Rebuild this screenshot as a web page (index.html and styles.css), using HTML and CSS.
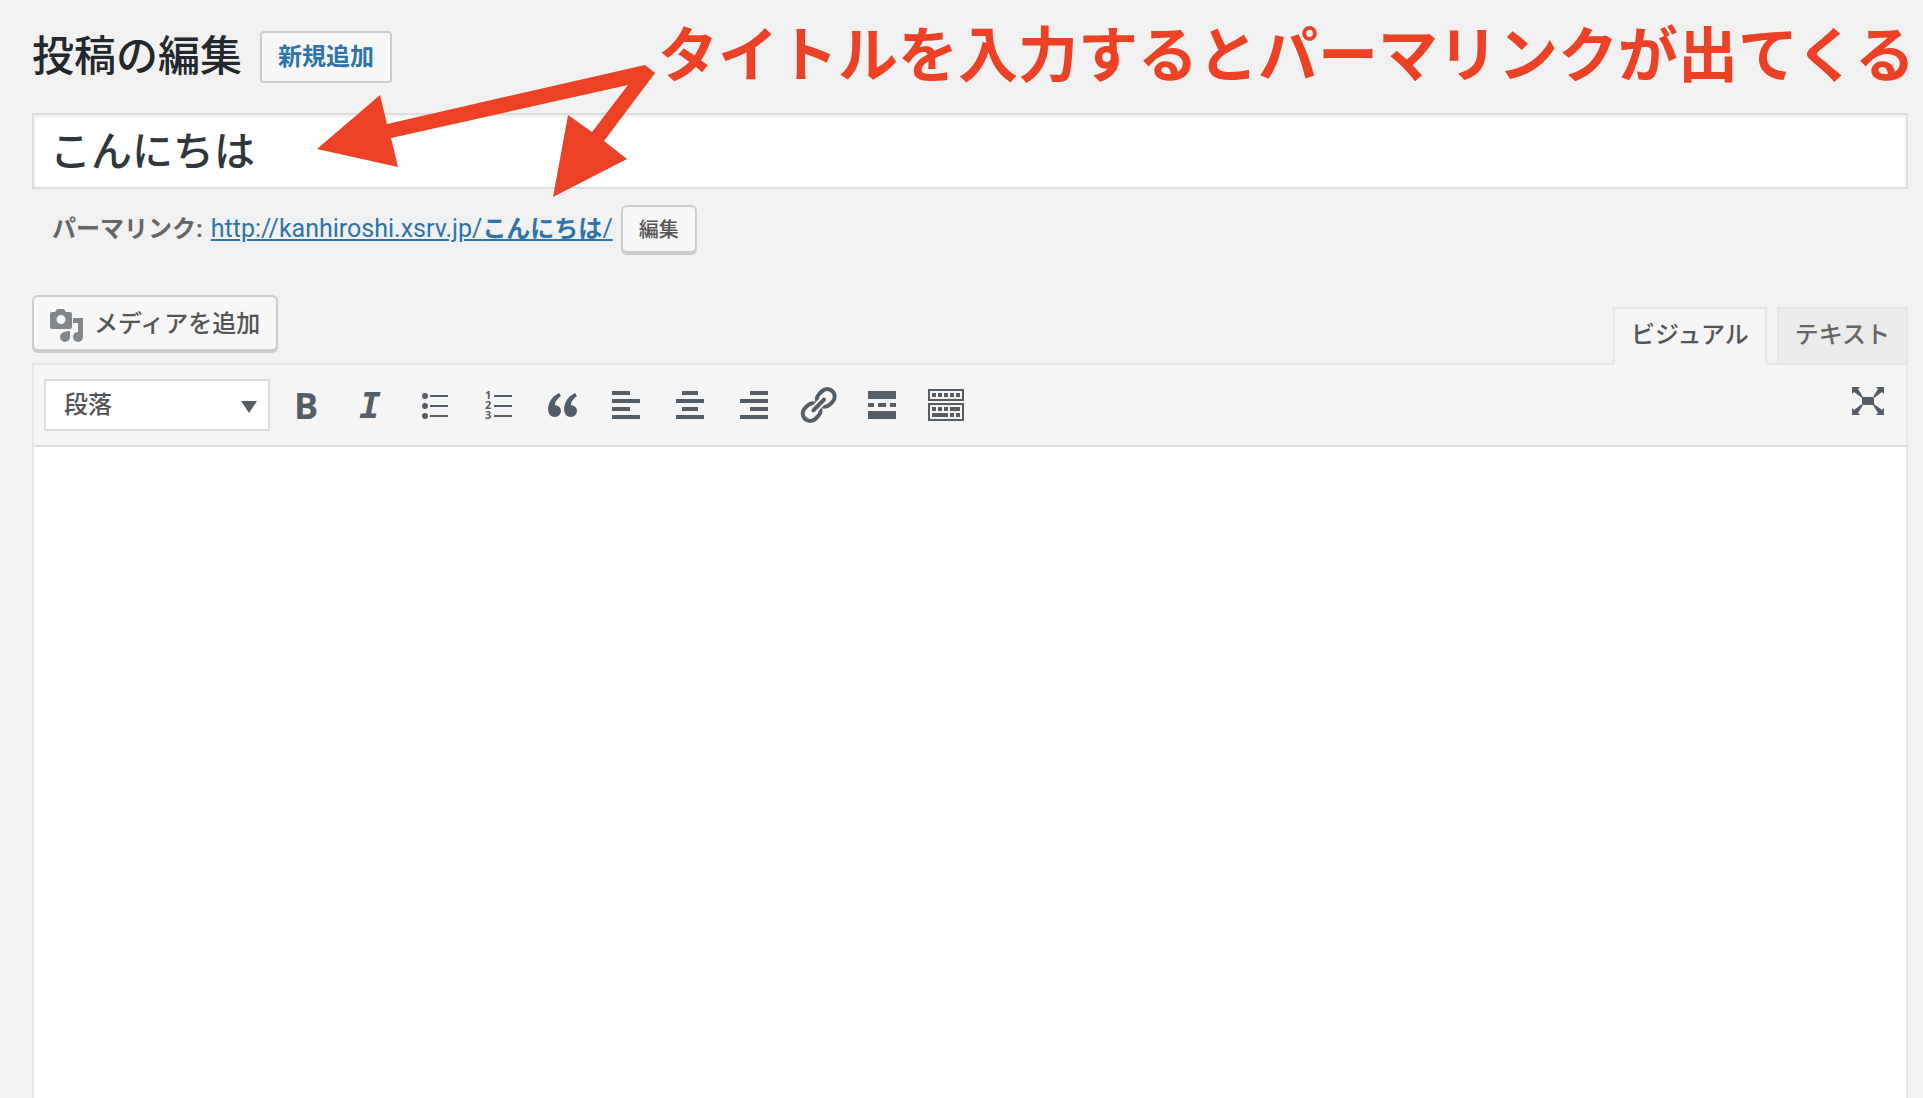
FILE: index.html
```html
<!DOCTYPE html>
<html lang="ja">
<head>
  <meta charset="UTF-8" />
  <meta name="viewport" content="width=device-width, initial-scale=1.0"/>
  <title>投稿の編集</title>
  <link rel="stylesheet" href="styles.css">
</head>
<body>

  <main class="wrap">
    <header class="page-head">
      <h1>投稿の編集</h1>
      <a href="#" class="page-title-action">新規追加</a>
      <p class="note">タイトルを入力するとパーマリンクが出てくる</p>
    </header>

    <input type="text" class="title" id="title" aria-label="タイトル" value="こんにちは">

    <div class="permalink">
      <strong>パーマリンク:</strong>
      <a href="#">http://kanhiroshi.xsrv.jp/<b>こんにちは</b>/</a>
      <button type="button" class="button small">編集</button>
    </div>

    <div class="editor-tools">
      <button type="button" class="button media">
        <svg class="media-icon" viewBox="0 0 34 34" aria-hidden="true">
          <path fill-rule="evenodd" d="M0 5q0-2 2-2h3l2-3h7l2 3h4q2 0 2 2v13q0 2-2 2H2q-2 0-2-2zM11 6a4.500 4.500 0 1 0 0 9a4.500 4.500 0 1 0 0-9z"/>
          <path d="M23 9h10v19a5 5 0 1 1-5-5V14h-5zM20 22v6a5 5 0 1 1-5-5q1-1 5-1z"/>
        </svg>
        <span>メディアを追加</span>
      </button>
      <div class="tabs">
        <button type="button" class="tab active">ビジュアル</button>
        <button type="button" class="tab">テキスト</button>
      </div>
    </div>

    <section class="editor">
      <div class="toolbar">
        <div class="format">
          <select aria-label="書式">
            <option>段落</option>
          </select>
        </div>
        <button type="button" class="tool bold" aria-label="太字">B</button>
        <button type="button" class="tool italic" aria-label="イタリック">I</button>
        <button type="button" class="tool" aria-label="番号なしリスト">
          <svg viewBox="0 0 40 40">
            <path d="M16 10h18v2H16zM16 20h18v2H16zM16 30h18v2H16z"/>
            <circle cx="11" cy="11" r="3"/><circle cx="11" cy="21" r="3"/><circle cx="11" cy="31" r="3"/>
          </svg>
        </button>
        <button type="button" class="tool" aria-label="番号付きリスト">
          <svg viewBox="0 0 40 40">
            <path d="M16 10h18v2H16zM16 20h18v2H16zM16 30h18v2H16z"/>
            <text x="7" y="14">1</text><text x="7" y="24">2</text><text x="7" y="34">3</text>
          </svg>
        </button>
        <button type="button" class="tool" aria-label="引用">
          <svg viewBox="0 0 40 40">
            <path d="M17 8l2 3Q13 15 13 20Q19 21 19 26a6 6 0 0 1-6 6Q6 32 6 23Q7 13 17 8z"/>
            <path d="M33 8l2 3Q29 15 29 20Q35 21 35 26a6 6 0 0 1-6 6Q22 32 22 23Q23 13 33 8z"/>
          </svg>
        </button>
        <button type="button" class="tool" aria-label="左寄せ">
          <svg viewBox="0 0 40 40"><path d="M6 6h18v4H6zM6 14h28v4H6zM6 22h18v4H6zM6 30h28v4H6z"/></svg>
        </button>
        <button type="button" class="tool" aria-label="中央揃え">
          <svg viewBox="0 0 40 40"><path d="M12 6h16v4H12zM6 14h28v4H6zM12 22h16v4H12zM6 30h28v4H6z"/></svg>
        </button>
        <button type="button" class="tool" aria-label="右寄せ">
          <svg viewBox="0 0 40 40"><path d="M16 6h18v4H16zM6 14h28v4H6zM16 22h18v4H16zM6 30h28v4H6z"/></svg>
        </button>
        <button type="button" class="tool" aria-label="リンクの挿入">
          <svg viewBox="0 0 40 40">
            <g class="link-icon" transform="rotate(-45 20 20)">
              <rect x="1" y="13" width="19" height="15" rx="7.500"/>
              <rect x="21" y="13" width="19" height="15" rx="7.500"/>
              <path class="gap" d="M13 20.500h15"/>
              <path d="M13 20.500h15"/>
            </g>
          </svg>
        </button>
        <button type="button" class="tool" aria-label="続きを読む">
          <svg viewBox="0 0 40 40"><path d="M6 6h28v8H6zM6 18h6v4H6zM16 18h8v4h-8zM28 18h6v4h-6zM6 26h28v8H6z"/></svg>
        </button>
        <button type="button" class="tool" aria-label="ツールバー切り替え">
          <svg viewBox="0 0 40 40">
            <path fill-rule="evenodd" d="M2 4h36v12H2zM4 6v8h32V6zM2 18h36v18H2zM4 20v14h32V20z"/>
            <path d="M6 8h4v4H6zM12 8h4v4h-4zM18 8h4v4h-4zM24 8h4v4h-4zM30 8h4v4h-4zM6 22h4v4H6zM12 22h4v4h-4zM18 22h4v4h-4zM24 22h10v4H24zM6 28h16v4H6zM24 28h4v4h-4zM30 28h4v4h-4z"/>
          </svg>
        </button>
        <button type="button" class="tool fullscreen" aria-label="集中執筆モード">
          <svg viewBox="0 0 40 40"><path d="M14 16h12v8H14zM4 6h8l-2 2 5 8-1 1-8-6-2 2zM36 6h-8l2 2-5 8 1 1 8-6 2 2zM4 34h8l-2-2 5-8-1-1-8 6-2-2zM36 34h-8l2-2-5-8 1-1 8 6 2-2z"/></svg>
        </button>
      </div>
      <textarea class="content" aria-label="本文"></textarea>
    </section>

    <svg class="arrows" viewBox="0 0 340 134" aria-hidden="true">
      <path d="M0 85L63 31l7 29L328 1l10 8L287 77l23 18L236 133l15-82 24 17L311 21 74 74l7 29z"/>
    </svg>
  </main>

</body>
</html>
```
FILE: styles.css
```css
* {
  box-sizing: border-box;
}

body {
  margin: 0;
  background: #f1f1f1;
  color: #555;
  font-family: Roboto, "Noto Sans CJK JP", sans-serif;
  font-size: 24px;
  font-weight: 500;
  line-height: 32px;
}

button,
input,
select,
textarea {
  font-family: inherit;
  font-weight: inherit;
  color: inherit;
}

.wrap {
  position: relative;
  display: flex;
  flex-direction: column;
  min-height: 100vh;
  padding: 0 15px 0 32px;
}

.page-head {
  display: flex;
  align-items: center;
  height: 113px;
  margin-right: -7px;
}

h1 {
  margin: 0;
  color: #23282d;
  font-size: 42px;
  font-weight: 500;
  line-height: 60px;
  white-space: nowrap;
}

.page-title-action {
  margin-left: 18px;
  padding: 8px 16px;
  border: 2px solid #ccc;
  border-radius: 4px;
  background: #f7f7f7;
  color: #2e74a8;
  font-weight: 700;
  text-decoration: none;
  white-space: nowrap;
}

.note {
  margin: 0 0 0 auto;
  color: #ed4125;
  font-size: 60px;
  font-weight: 700;
  line-height: 60px;
  white-space: nowrap;
}

.title {
  width: 100%;
  height: 76px;
  padding: 0 16px 6px;
  border: 2px solid #ddd;
  background: #fff;
  box-shadow: inset 0 2px 4px rgba(0, 0, 0, 0.07);
  color: #32373c;
  font-size: 41px;
}

.permalink {
  display: flex;
  align-items: center;
  gap: 8px;
  margin: 16px 20px 0;
  color: #666;
}

.permalink a {
  color: #2e74a8;
  font-size: 25px;
  font-weight: 400;
}

.permalink b {
  font-size: 24px;
}

.button {
  border: 2px solid #ccc;
  border-radius: 6px;
  background: #f7f7f7;
  box-shadow: 0 2px 0 #ccc;
  color: #555;
}

.small {
  height: 48px;
  padding: 0 16px 2px;
  font-size: 20px;
}

.editor-tools {
  display: flex;
  justify-content: space-between;
  align-items: flex-end;
  margin-top: 42px;
}

.media {
  display: flex;
  align-items: center;
  gap: 10px;
  height: 56px;
  margin-bottom: 12px;
  padding: 0 16px;
  font-size: 24px;
}

.media span {
  padding-bottom: 4px;
}

.media-icon {
  width: 34px;
  height: 40px;
  padding-top: 6px;
  fill: #82878c;
}

.tabs {
  display: flex;
  gap: 10px;
}

.tab {
  position: relative;
  height: 58px;
  margin-bottom: -2px;
  padding: 0 16px 8px;
  border: 2px solid #e5e5e5;
  background: #ebebeb;
  color: #666;
  font-size: 24px;
}

.tab.active {
  border-bottom-color: #f5f5f5;
  background: #f5f5f5;
  color: #555;
}

.editor {
  display: flex;
  flex: 1;
  flex-direction: column;
  border: 2px solid #e5e5e5;
  border-bottom: 0;
}

.toolbar {
  display: flex;
  align-items: center;
  height: 82px;
  padding: 0 10px;
  border-bottom: 2px solid #ddd;
  background: #f5f5f5;
}

.format {
  position: relative;
  width: 226px;
  margin-right: 4px;
}

.format select {
  display: block;
  width: 100%;
  height: 52px;
  padding: 0 18px;
  border: 2px solid #ddd;
  border-radius: 0;
  background: #fff;
  appearance: none;
  font-size: 24px;
}

.format::after {
  content: "";
  position: absolute;
  top: 22px;
  right: 13px;
  border: 8px solid transparent;
  border-top: 12px solid #555d66;
  border-bottom: 0;
  pointer-events: none;
}

.tool {
  display: flex;
  align-items: center;
  justify-content: center;
  width: 64px;
  height: 52px;
  padding: 0;
  border: 0;
  background: none;
  color: #555d66;
}

.tool svg {
  width: 40px;
  height: 40px;
  fill: #555d66;
}

.tool text {
  font: 700 11px "Open Sans", sans-serif;
}

.bold {
  font: 700 36px "Open Sans", sans-serif;
}

.italic {
  font: italic 700 36px "DejaVu Sans Mono", monospace;
}

.link-icon {
  fill: none;
  stroke: #555d66;
  stroke-width: 4;
  stroke-linecap: round;
}

.link-icon .gap {
  stroke: #f5f5f5;
  stroke-width: 8;
}

.fullscreen {
  margin: 0 -4px 8px auto;
}

.content {
  flex: 1;
  width: 100%;
  min-height: 300px;
  padding: 20px;
  border: 0;
  outline: 0;
  background: #fff;
  resize: none;
}

/* arrows from the note to the title and the permalink */
.arrows {
  position: absolute;
  top: 64px;
  left: 317px;
  width: 340px;
  height: 134px;
  fill: #ed4125;
  pointer-events: none;
}
```
